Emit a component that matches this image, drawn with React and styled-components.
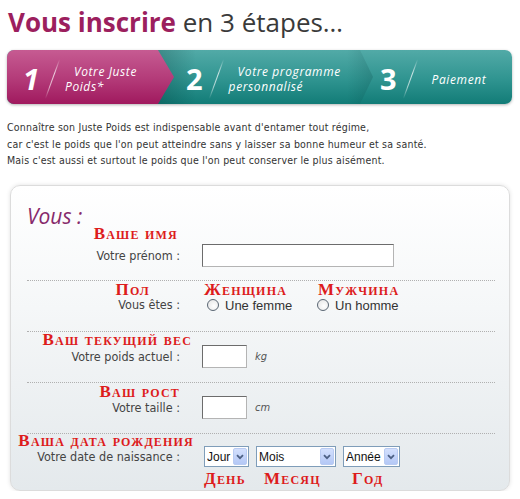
import React from "react";
import styled, { createGlobalStyle } from "styled-components";

const GlobalStyle = createGlobalStyle`
  body {
    margin: 0;
    background: #fff;
  }
`;

const Page = styled.div`
  width: 520px;
  box-sizing: border-box;
  padding: 7px 10px 0 8px;
  font-family: "DejaVu Sans Condensed", "DejaVu Sans", sans-serif;
  color: #333;
`;

const Title = styled.h1`
  margin: 0;
  font-family: "Open Sans", sans-serif;
  font-size: 26px;
  line-height: 30px;
  font-weight: 400;
  color: #3a3a3a;
  white-space: nowrap;

  strong {
    color: #9c1f5e;
    font-weight: 700;
  }
`;

const StepBar = styled.div`
  margin-top: 13px;
  height: 54px;
  display: flex;
  border-radius: 7px;
  overflow: hidden;
  background: linear-gradient(#52aaa7, #2f9490 55%, #127c77);
  box-shadow: 0 1px 3px rgba(0, 0, 0, 0.3);
  margin-left: -1px;
  margin-right: -2px;
`;

const Step = styled.div`
  position: relative;
  display: flex;
  align-items: center;
  box-sizing: border-box;
  padding: 4px 0 0 ${(p) => p.$pad}px;
  width: ${(p) => (p.$w ? `${p.$w}px` : "auto")};
  flex: ${(p) => (p.$w ? "none" : "1")};
  color: #fff;

  ${(p) =>
    p.$active &&
    `
    z-index: 2;
    background: linear-gradient(#c65b92, #b33a78 55%, #a0195e);
    clip-path: polygon(0 0, calc(100% - 16px) 0, 100% 50%, calc(100% - 16px) 100%, 0 100%);
  `}

  ${(p) =>
    p.$shade &&
    `
    &::before {
      content: "";
      position: absolute;
      left: -18px;
      top: 0;
      bottom: 0;
      width: 40px;
      background: linear-gradient(90deg, rgba(0, 40, 40, 0.25), rgba(0, 40, 40, 0));
    }
  `}

  ${(p) =>
    p.$tip &&
    `
    &::after {
      content: "";
      position: absolute;
      right: -12px;
      top: 0;
      bottom: 0;
      width: 26px;
      background: linear-gradient(90deg, rgba(0, 50, 50, 0), rgba(0, 50, 50, 0.18));
      clip-path: polygon(0 0, 50% 0, 100% 50%, 50% 100%, 0 100%);
    }
  `}
`;

const Digit = styled.span`
  position: relative;
  font-family: "Open Sans", sans-serif;
  font-weight: 700;
  font-size: 29px;
  line-height: 30px;
  font-style: ${(p) => (p.$italic ? "italic" : "normal")};
`;

const Slash = styled.span`
  position: relative;
  width: 1px;
  height: 42px;
  margin: 0 12px 0 13px;
  transform: rotate(20deg);
  background: linear-gradient(
    rgba(255, 255, 255, 0),
    rgba(255, 255, 255, 0.75) 35%,
    rgba(255, 255, 255, 0.6) 70%,
    rgba(255, 255, 255, 0)
  );
`;

const StepText = styled.span`
  position: relative;
  font-family: "Open Sans", sans-serif;
  font-style: italic;
  font-size: 12px;
  line-height: 15px;
  letter-spacing: 0.6px;
  text-indent: 9px;
  white-space: pre-line;
`;

const Intro = styled.p`
  margin: 15px 0 0 -1px;
  font-size: 10.5px;
  line-height: 16.7px;
  letter-spacing: 0.2px;
  color: #333;
  white-space: nowrap;
`;

const Card = styled.form`
  margin: 16px 0 0 2px;
  box-sizing: border-box;
  border: 1px solid #dcdcdc;
  border-radius: 10px;
  padding: 20px 14px 5px 16px;
  background: linear-gradient(#ffffff, #f5f7f8 40%, #e4e9ec);
  box-shadow: 0 0 4px rgba(0, 0, 0, 0.12);
`;

const CardTitle = styled.h2`
  margin: 0;
  font-family: "Open Sans", sans-serif;
  font-style: italic;
  font-weight: 400;
  font-size: 21px;
  line-height: 21px;
  color: #872a6b;
`;

const Section = styled.div`
  display: grid;
  grid-template-columns: 153px 1fr;
  column-gap: 22px;
  align-items: end;
  padding: ${(p) => p.$pt}px 0 ${(p) => p.$pb}px;
  border-top: ${(p) => (p.$sep ? "1px dotted #b0b0b0" : "none")};
`;

const LabelCell = styled.div`
  display: flex;
  flex-direction: column;
  align-items: flex-end;
`;

const Note = styled.span`
  display: block;
  font-family: "Liberation Serif", serif;
  font-weight: 700;
  font-variant: small-caps;
  font-size: 17px;
  line-height: 13px;
  letter-spacing: 1.2px;
  color: #dd1c1c;
  white-space: nowrap;
  margin-right: ${(p) => -(p.$dx || 0)}px;
  margin-left: ${(p) => p.$indent || 0}px;
  margin-bottom: ${(p) => p.$mb || 0}px;
`;

const Label = styled.label`
  font-size: 12.5px;
  line-height: ${(p) => p.$h}px;
  color: #444;
  white-space: nowrap;
`;

const FieldRow = styled.div`
  display: flex;
  align-items: center;
`;

const TextInput = styled.input`
  box-sizing: border-box;
  width: ${(p) => p.$w}px;
  height: 23px;
  margin: 0;
  border: 1px solid #b4b4b4;
  border-top-color: #6c6c6c;
  border-left-color: #6c6c6c;
  background: #fff;
  font: 13px "Liberation Sans", sans-serif;
`;

const Unit = styled.span`
  margin-left: 8px;
  font-size: 11px;
  font-style: italic;
  color: #555;
`;

const Options = styled.div`
  display: grid;
  grid-template-columns: 110px auto;
  padding-left: 5px;
`;

const Option = styled.div`
  display: flex;
  flex-direction: column;
`;

const RadioRow = styled.label`
  display: flex;
  align-items: center;
  height: 18px;
  font-family: "Liberation Sans", sans-serif;
  font-size: 13px;
  color: #333;
`;

const Radio = styled.input`
  appearance: none;
  box-sizing: border-box;
  width: 12px;
  height: 12px;
  margin: 0 6px 0 0;
  border: 1px solid #5a6673;
  border-radius: 50%;
  background: radial-gradient(circle at 60% 60%, #ffffff, #e2e2e2);
`;

const Selects = styled.div`
  display: grid;
  grid-template-columns: 45px 80px 57px;
  column-gap: 7px;
  margin-left: 2px;
`;

const SelectBox = styled.div`
  box-sizing: border-box;
  display: flex;
  height: 21px;
  border: 1px solid #7f9db9;
  background: #fff;

  select {
    appearance: none;
    flex: 1;
    min-width: 0;
    border: 0;
    margin: 0;
    padding: 0 0 0 2px;
    background: transparent;
    font: 12px "Liberation Sans", sans-serif;
    color: #111;
    outline: none;
  }
`;

const ArrowBtn = styled.span`
  box-sizing: border-box;
  width: 14px;
  margin: 1px;
  display: flex;
  align-items: center;
  justify-content: center;
  border: 1px solid #b9cbf2;
  border-radius: 2px;
  background: linear-gradient(#d3e0fd, #b4c8f6);
`;

const UnderNotes = styled(Selects)`
  grid-column: 2;
  margin-top: 5px;
`;

const Chevron = () => (
  <svg width="8" height="6" viewBox="0 0 8 6">
    <path d="M1 1.2 L4 4.2 L7 1.2" fill="none" stroke="#4d6185" strokeWidth="1.8" />
  </svg>
);

const Select = ({ placeholder }) => (
  <SelectBox>
    <select defaultValue="">
      <option value="">{placeholder}</option>
    </select>
    <ArrowBtn>
      <Chevron />
    </ArrowBtn>
  </SelectBox>
);

const steps = [
  { n: "1", text: "Votre Juste\nPoids*", w: 167, pad: 16, active: true, italic: true },
  { n: "2", text: "Votre programme\npersonnalisé", w: 187, pad: 12, shade: true, tip: true },
  { n: "3", text: "Paiement", pad: 19 },
];

export default function App() {
  return (
    <Page>
      <GlobalStyle />
      <Title>
        <strong>Vous inscrire</strong> en 3 étapes…
      </Title>

      <StepBar>
        {steps.map((s) => (
          <Step key={s.n} $w={s.w} $pad={s.pad} $active={s.active} $shade={s.shade} $tip={s.tip}>
            <Digit $italic={s.italic}>{s.n}</Digit>
            <Slash />
            <StepText>{s.text}</StepText>
          </Step>
        ))}
      </StepBar>

      <Intro>
        Connaître son Juste Poids est indispensable avant d'entamer tout régime,
        <br />
        car c'est le poids que l'on peut atteindre sans y laisser sa bonne humeur et sa santé.
        <br />
        Mais c'est aussi et surtout le poids que l'on peut conserver le plus aisément.
      </Intro>

      <Card onSubmit={(e) => e.preventDefault()}>
        <CardTitle>Vous :</CardTitle>

        <Section $pt={0} $pb={13}>
          <LabelCell>
            <Note $dx={-2} $mb={4}>Ваше имя</Note>
            <Label $h={23}>Votre prénom :</Label>
          </LabelCell>
          <FieldRow>
            <TextInput type="text" $w={192} />
          </FieldRow>
        </Section>

        <Section $sep $pt={2} $pb={17}>
          <LabelCell>
            <Note $dx={-30}>Пол</Note>
            <Label $h={18}>Vous êtes :</Label>
          </LabelCell>
          <Options>
            <Option>
              <Note $indent={-3}>Женщина</Note>
              <RadioRow>
                <Radio type="radio" name="sexe" />
                Une femme
              </RadioRow>
            </Option>
            <Option>
              <Note $indent={1}>Мужчина</Note>
              <RadioRow>
                <Radio type="radio" name="sexe" />
                Un homme
              </RadioRow>
            </Option>
          </Options>
        </Section>

        <Section $sep $pt={1} $pb={14}>
          <LabelCell>
            <Note $dx={12} $mb={-1}>Ваш текущий вес</Note>
            <Label $h={23}>Votre poids actuel :</Label>
          </LabelCell>
          <FieldRow>
            <TextInput type="text" $w={45} />
            <Unit>kg</Unit>
          </FieldRow>
        </Section>

        <Section $sep $pt={2} $pb={14}>
          <LabelCell>
            <Note $mb={-2}>Ваш рост</Note>
            <Label $h={23}>Votre taille :</Label>
          </LabelCell>
          <FieldRow>
            <TextInput type="text" $w={45} />
            <Unit>cm</Unit>
          </FieldRow>
        </Section>

        <Section $sep $pt={0} $pb={0}>
          <LabelCell>
            <Note $dx={14} $mb={-1}>Ваша дата рождения</Note>
            <Label $h={21}>Votre date de naissance :</Label>
          </LabelCell>
          <Selects>
            <Select placeholder="Jour" />
            <Select placeholder="Mois" />
            <Select placeholder="Année" />
          </Selects>
          <UnderNotes>
            <Note>День</Note>
            <Note $indent={8}>Месяц</Note>
            <Note $indent={9}>Год</Note>
          </UnderNotes>
        </Section>
      </Card>
    </Page>
  );
}
